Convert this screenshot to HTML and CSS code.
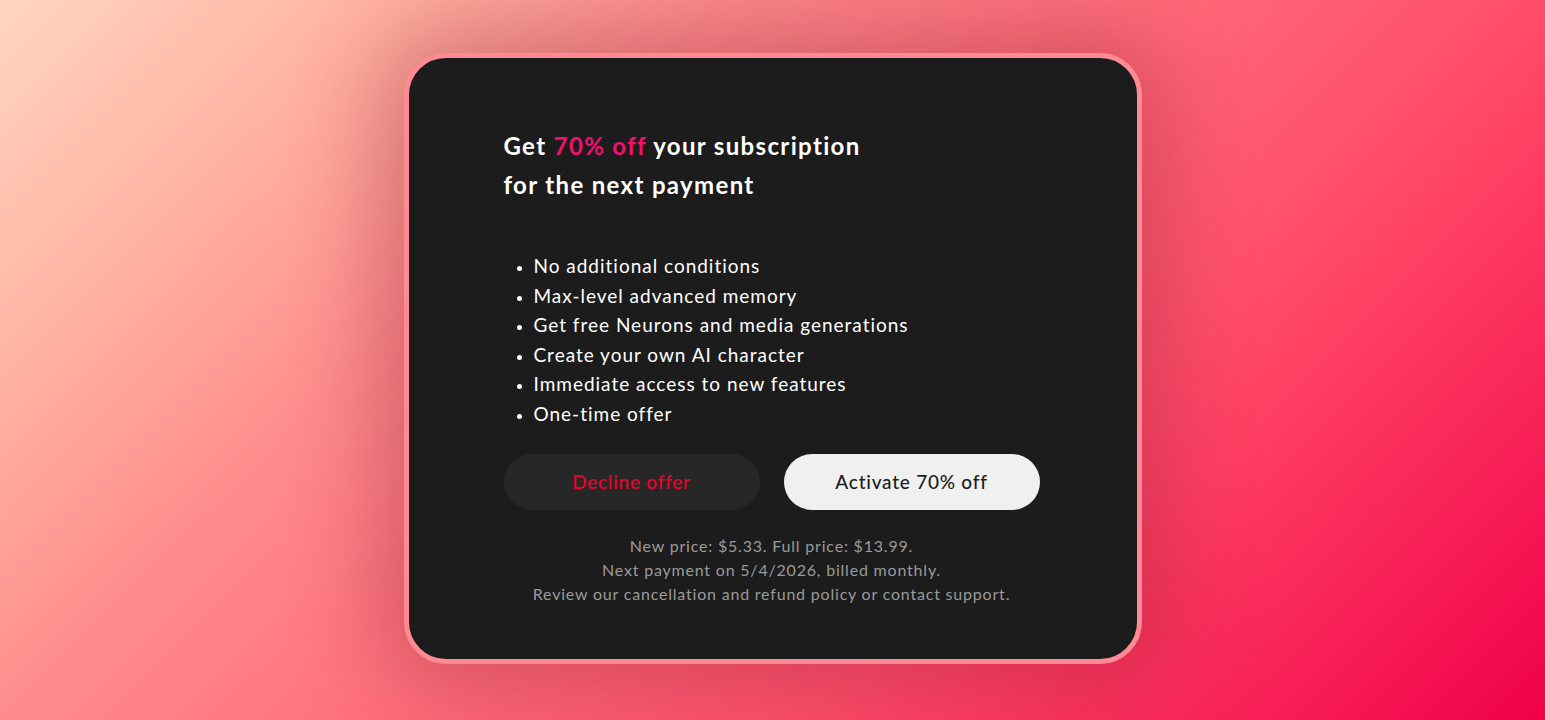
FILE: index.html
```html
<!DOCTYPE html>
<html lang="en">
<head>
<meta charset="utf-8">
<title>Offer</title>
<link rel="stylesheet" href="styles.css">
</head>
<body>
<main class="stage">
  <section class="card">
    <h1 class="title">Get <span class="accent">70% off</span> your subscription<br>for the next payment</h1>
    <ul class="perks">
      <li>No additional conditions</li>
      <li>Max-level advanced memory</li>
      <li>Get free Neurons and media generations</li>
      <li>Create your own AI character</li>
      <li>Immediate access to new features</li>
      <li>One-time offer</li>
    </ul>
    <div class="actions">
      <button class="btn btn-decline">Decline offer</button>
      <button class="btn btn-activate">Activate 70% off</button>
    </div>
    <p class="fineprint">New price: $5.33. Full price: $13.99.<br>Next payment on 5/4/2026, billed monthly.<br>Review our cancellation and refund policy or contact support.</p>
  </section>
</main>
</body>
</html>
```
FILE: styles.css
```css
* { box-sizing: border-box; }
html, body { margin: 0; height: 100%; }
body {
  font-family: "Lato", "Noto Sans", sans-serif;
  letter-spacing: 0.05em;
  background: linear-gradient(135deg, #ffd6c0 0%, #ffb0a0 18%, #ff8c8c 32%, #ff6d7a 50%, #ff4d6a 68%, #ff3d62 75%, #f0004a 100%);
  overflow: hidden;
}
.stage {
  height: 100%;
  display: flex;
  align-items: flex-start;
  justify-content: center;
  padding-top: 53px;
}
.card {
  width: 738px;
  height: 611px;
  background: #1c1c1c;
  border: 5px solid #ff8a94;
  border-radius: 42px;
  padding: 68px 97px 0 95px;
  box-shadow: 0 0 90px 24px rgba(120, 20, 40, 0.3);
  color: #fff;
}
.title {
  margin: 0;
  font-size: 24px;
  font-weight: 700;
  line-height: 39px;
  letter-spacing: 0.056em;
}
.accent { color: #f2106e; }
.perks {
  margin: 47px 0 0;
  padding: 0 0 0 30px;
  font-size: 19px;
  line-height: 29.6px;
  letter-spacing: 0.052em;
}
.perks li::marker { font-size: 16px; }
.actions {
  display: flex;
  gap: 24px;
  margin-top: 25px;
}
.btn {
  flex: 1;
  height: 56px;
  border: 0;
  border-radius: 28px;
  font-family: inherit;
  letter-spacing: 0.04em;
  font-size: 19px;
  font-weight: 500;
}
.btn-decline { background: #272727; color: #f0002d; }
.btn-activate { background: #f0f0f0; color: #1c1c1c; }
.fineprint {
  margin: 24px 0 0;
  text-align: center;
  color: #9a9a9a;
  font-size: 16px;
  line-height: 24px;
}
```
